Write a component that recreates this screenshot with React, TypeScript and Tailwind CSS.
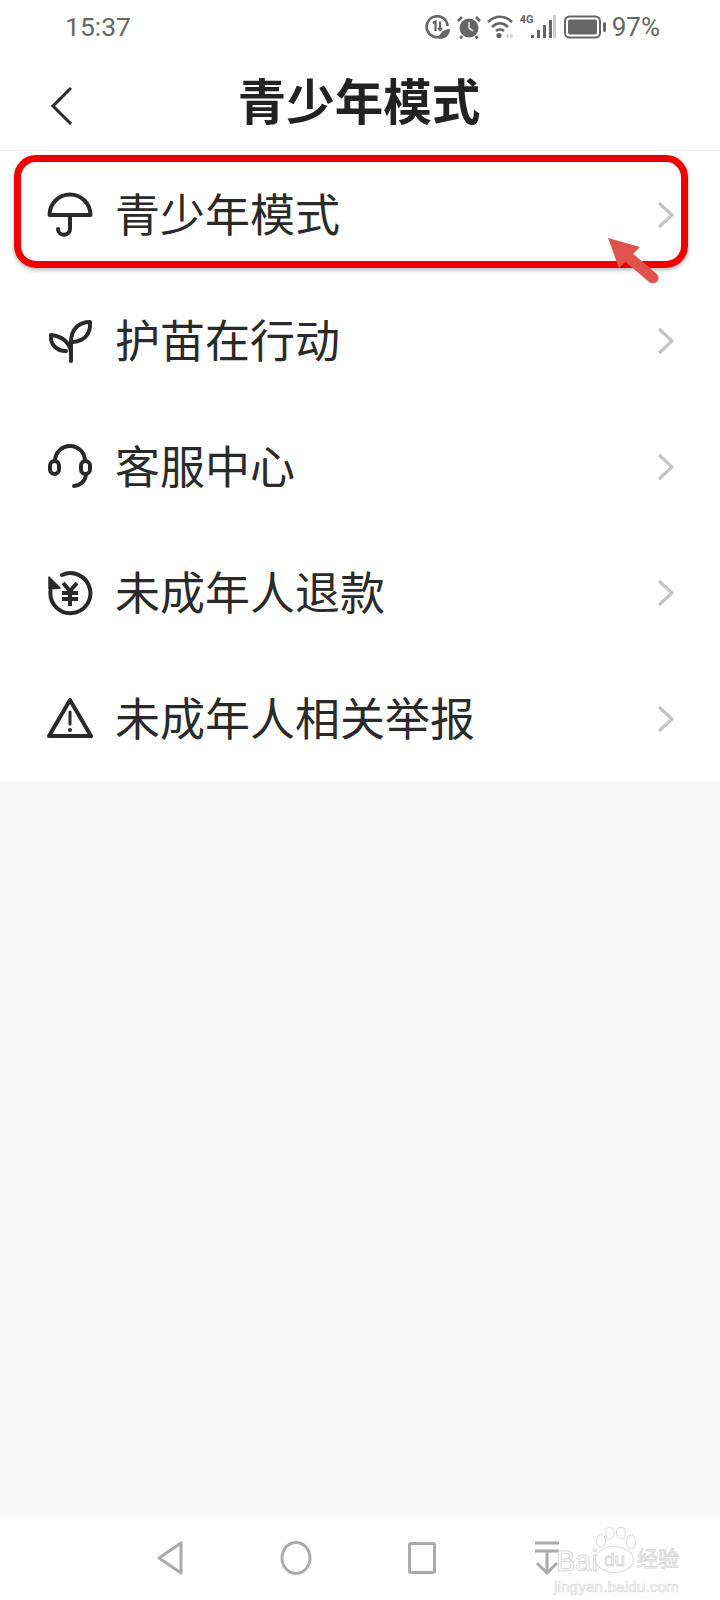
import React from 'react';

const iconProps = {
  width: 46,
  height: 46,
  viewBox: '0 0 46 46',
  fill: 'none',
  stroke: '#2a2a2a',
  strokeWidth: 4,
  strokeLinecap: 'round' as const,
  strokeLinejoin: 'round' as const,
  className: 'mt-[2px]',
};

const UmbrellaIcon = () => (
  <svg {...iconProps}>
    <path d="M2.5 23 A20.5 20.5 0 0 1 43.5 23 Z" />
    <path d="M23 23 V36.5 a6 6 0 0 1 -12 0.5" />
  </svg>
);

const SproutIcon = () => (
  <svg {...iconProps}>
    <path d="M24 43 V24 C24 11 32 4 43 4 C44 15 38 23 26 24" />
    <path d="M24 36 C24 25 15 18 4 17 C3 27 10 33 19 33" />
  </svg>
);

const HeadsetIcon = () => (
  <svg {...iconProps}>
    <path d="M8 17 A15 15 0 0 1 38 17" />
    <rect x="3" y="17" width="9" height="13" rx="4.5" />
    <rect x="34" y="17" width="9" height="13" rx="4.5" />
    <path d="M39 31 C38 38 34 41 27 42" />
  </svg>
);

const RefundIcon = () => (
  <svg {...iconProps}>
    <path d="M15 5 A20 20 0 1 1 3.5 21" />
    <path d="M2 7 L2 19 L13 18 Z" fill="#2a2a2a" strokeWidth="1.5" />
    <path d="M16 13 L23 21 L30 13 M15 23 H31 M15 29 H31 M23 21 V36" strokeLinecap="butt" strokeLinejoin="miter" strokeWidth="4" />
  </svg>
);

const WarningIcon = () => (
  <svg {...iconProps}>
    <path d="M23 4 L44 40 H2 Z" />
    <path d="M23 16 V28" strokeWidth="3" />
    <circle cx="23" cy="34" r="2" fill="#2a2a2a" stroke="none" />
  </svg>
);

const rows = [
  { label: '青少年模式', icon: <UmbrellaIcon /> },
  { label: '护苗在行动', icon: <SproutIcon /> },
  { label: '客服中心', icon: <HeadsetIcon /> },
  { label: '未成年人退款', icon: <RefundIcon /> },
  { label: '未成年人相关举报', icon: <WarningIcon /> },
];

const StatusIcons = () => (
  <div className="flex items-center">
    {/* data saver */}
    <svg width="25" height="24" viewBox="0 0 25 24" fill="none">
      <path d="M17 21 A10.5 10.5 0 1 1 22.6 11" stroke="#666" strokeWidth="2.6" />
      <path d="M8 8 L10.5 6.5 V16 M15 6.5 V15 M13 13 L15 15 L17 13" stroke="#666" strokeWidth="2.2" />
      <path d="M14 24 C14 18 19 14 25 14 C25 20 21 24 14 24 Z" fill="#666" />
    </svg>
    {/* alarm */}
    <svg width="24" height="24" viewBox="0 0 24 24" fill="none" className="ml-[7px]">
      <circle cx="12" cy="13" r="9.5" fill="#666" />
      <path d="M12 7 V13 L16 16" stroke="#ddd" strokeWidth="1.6" />
      <path d="M1 6 L5 2 M23 6 L19 2 M5 21 L3.5 23.5 M19 21 L20.5 23.5" stroke="#666" strokeWidth="2.6" />
    </svg>
    {/* wifi */}
    <svg width="26" height="24" viewBox="0 0 26 24" fill="none" className="ml-[6px]">
      <path d="M1 7 C8 0 18 0 25 7 M5 12 C10 7 16 7 21 12 M9 16 C11 14 15 14 17 16" stroke="#666" strokeWidth="2.6" />
      <circle cx="12" cy="20.5" r="2.6" fill="#666" />
      <path d="M19 21 L21.5 18.5 V23.5 Z M26 21 L23.5 18.5 V23.5 Z" fill="#bbb" />
    </svg>
    {/* 4G + signal */}
    <div className="relative ml-[7px] h-[24px] w-[35px]">
      <span className="absolute left-0 top-[-2px] text-[11px] leading-[13px] font-bold text-[#666] font-['Roboto',sans-serif]">4G</span>
      <svg width="25" height="24" viewBox="0 0 25 24" className="absolute left-[11px] top-0">
        <rect x="0" y="20" width="3" height="3" fill="#666" />
        <rect x="6" y="15" width="3" height="8" fill="#666" />
        <rect x="12" y="10" width="3" height="13" fill="#666" />
        <rect x="18" y="5" width="3" height="18" fill="#666" />
        <rect x="22" y="0" width="3" height="23" fill="#ccc" />
      </svg>
    </div>
    {/* battery */}
    <svg width="42" height="24" viewBox="0 0 42 24" fill="none" className="ml-[9px]">
      <rect x="1" y="1.5" width="35" height="21" rx="4.5" stroke="#666" strokeWidth="2" />
      <rect x="4" y="4.5" width="29" height="15" rx="2" fill="#666" />
      <rect x="39" y="7" width="3" height="10" rx="1.5" fill="#666" />
    </svg>
    <span className="ml-[6px] text-[26px] leading-none text-[#666] font-['Roboto',sans-serif]">97%</span>
  </div>
);

const BaiduWatermark = () => (
  <div className="absolute left-[554px] top-[1526px] w-[130px] h-[70px] font-['Liberation_Sans',sans-serif]">
    <svg width="42" height="30" viewBox="0 0 42 30" fill="#fff" stroke="#dedede" strokeWidth="1.2" className="absolute left-[41px] top-0">
      <ellipse cx="6" cy="15" rx="4.5" ry="6.5" />
      <ellipse cx="15" cy="7" rx="4.5" ry="6" />
      <ellipse cx="26" cy="7" rx="4.5" ry="6" />
      <ellipse cx="36" cy="16" rx="4.5" ry="7" />
    </svg>
    <span className="absolute left-[2px] top-[21px] text-[29px] leading-none text-white [-webkit-text-stroke:1px_#dadada]">Bai</span>
    <span className="absolute left-[41px] top-[20px] flex h-[27px] w-[39px] items-center justify-center rounded-[50%] border border-[#dadada] bg-white text-[19px] leading-none text-white [-webkit-text-stroke:1px_#dadada]">du</span>
    <span className="absolute left-[83px] top-[21px] text-[21px] leading-none text-white [-webkit-text-stroke:1px_#dadada] font-['Noto_Sans_CJK_SC',sans-serif]">经验</span>
    <span className="absolute left-0 top-[53px] whitespace-nowrap text-[15.5px] leading-none text-white [-webkit-text-stroke:0.7px_#dcdcdc]">jingyan.baidu.com</span>
  </div>
);

export default function App() {
  return (
    <div className="relative flex h-[1600px] w-[720px] flex-col overflow-hidden bg-white font-['Noto_Sans_CJK_SC',sans-serif]">
      <div className="flex h-[54px] items-center justify-between pl-[65px] pr-[60px]">
        <span className="text-[26.5px] leading-none text-[#666] font-['Roboto',sans-serif]">15:37</span>
        <StatusIcons />
      </div>

      <header className="relative flex h-[97px] items-center justify-center border-b border-[#ececec]">
        <svg width="24" height="40" viewBox="0 0 24 40" fill="none" className="absolute left-[50px] top-[32px]">
          <path d="M21 2 L3 20 L21 38" stroke="#2a2a2a" strokeWidth="3" />
        </svg>
        <h1 className="mb-[5px] mr-[2px] text-[48.5px] leading-none font-bold text-[#222]">青少年模式</h1>
      </header>

      <div className="relative bg-white">
        {rows.map((row) => (
          <div key={row.label} className="flex h-[126px] items-center pl-[47px] pr-[45px]">
            {row.icon}
            <span className="mb-[3px] ml-[22px] flex-1 text-[45px] leading-none text-[#2a2a2a]">{row.label}</span>
            <svg width="18" height="28" viewBox="0 0 18 28" fill="none" className="mt-[2px]">
              <path d="M2 2 L15 14 L2 26" stroke="#c4c4c4" strokeWidth="3.2" />
            </svg>
          </div>
        ))}

        {/* red annotation around the first row */}
        <div className="absolute left-[14px] top-[4px] h-[113px] w-[674px] rounded-[22px] border-[7px] border-[#ee0000] shadow-[0_2px_4px_rgba(0,0,0,0.3)]" />
        <svg width="60" height="56" viewBox="0 0 60 56" className="absolute left-[604px] top-[84px]">
          <path d="M4 3 L36 12 L15 33 Z" fill="#e0534d" />
          <path d="M22 20 L49 43" stroke="#e0534d" strokeWidth="11" strokeLinecap="round" />
        </svg>
      </div>

      <div className="flex-1 bg-[#f8f8f8]" />

      <nav className="relative h-[83px] bg-white">
        <div className="flex h-full items-center pb-[1px] pl-[157px]">
          <svg width="26" height="34" viewBox="0 0 26 34" fill="none">
            <path d="M24 2 V32 L2 17 Z" stroke="#aaa" strokeWidth="3" strokeLinejoin="round" />
          </svg>
          <svg width="32" height="34" viewBox="0 0 32 34" fill="none" className="ml-[97px]">
            <ellipse cx="16" cy="17" rx="14" ry="15.5" stroke="#aaa" strokeWidth="3" />
          </svg>
          <svg width="28" height="32" viewBox="0 0 28 32" fill="none" className="ml-[96px]">
            <rect x="1.5" y="1.5" width="25" height="29" rx="1.5" stroke="#aaa" strokeWidth="3" />
          </svg>
          <svg width="26" height="34" viewBox="0 0 26 34" fill="none" className="ml-[98px]">
            <path d="M1 2 H25 M1 10 H25 M13 10 V32 M3 22 L13 32 L23 22" stroke="#aaa" strokeWidth="3" />
          </svg>
        </div>
      </nav>

      <BaiduWatermark />
    </div>
  );
}
